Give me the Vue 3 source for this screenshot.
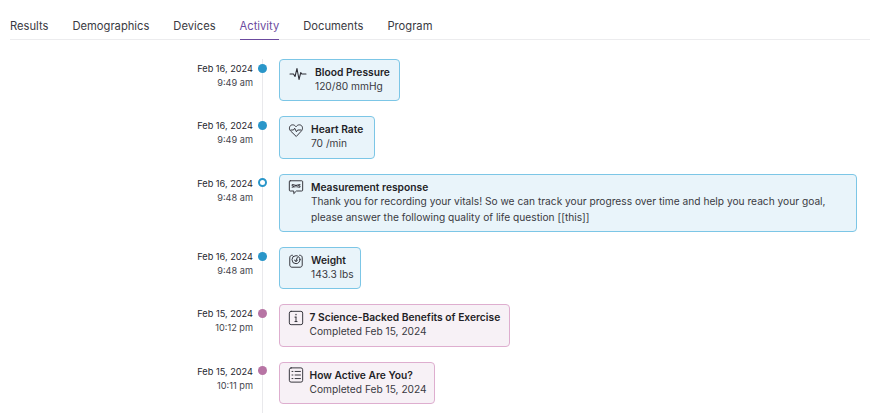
<script setup>
const tabs = [
  { label: 'Results' },
  { label: 'Demographics' },
  { label: 'Devices' },
  { label: 'Activity', active: true },
  { label: 'Documents' },
  { label: 'Program' }
]
const rows = [
  { date: 'Feb 16, 2024', time: '9:49 am', dot: 'blue', kind: 'blue', icon: 'pulse', title: 'Blood Pressure', lines: ['120/80 mmHg'] },
  { date: 'Feb 16, 2024', time: '9:49 am', dot: 'blue', kind: 'blue', icon: 'heart', title: 'Heart Rate', lines: ['70 /min'] },
  { date: 'Feb 16, 2024', time: '9:48 am', dot: 'ring', kind: 'blue', icon: 'sms', title: 'Measurement response', lines: ['Thank you for recording your vitals! So we can track your progress over time and help you reach your goal,', 'please answer the following quality of life question [[this]]'] },
  { date: 'Feb 16, 2024', time: '9:48 am', dot: 'blue', kind: 'blue', icon: 'scale', title: 'Weight', lines: ['143.3 lbs'] },
  { date: 'Feb 15, 2024', time: '10:12 pm', dot: 'pink', kind: 'pink', icon: 'info', title: '7 Science-Backed Benefits of Exercise', lines: ['Completed Feb 15, 2024'] },
  { date: 'Feb 15, 2024', time: '10:11 pm', dot: 'pink', kind: 'pink', icon: 'list', title: 'How Active Are You?', lines: ['Completed Feb 15, 2024'] }
]
</script>

<template>
  <div class="page">
    <nav class="tabs">
      <span v-for="t in tabs" :key="t.label" class="tab" :class="{ active: t.active }">{{ t.label }}</span>
    </nav>
    <div class="timeline">
      <div v-for="(r, i) in rows" :key="i" class="row">
        <div class="when">
          <div class="date">{{ r.date }}</div>
          <div class="time">{{ r.time }}</div>
        </div>
        <div class="rail"><span class="dot" :class="r.dot"></span></div>
        <div class="card" :class="[r.kind, r.icon]">
          <svg class="icon" viewBox="0 0 18 18" fill="none" stroke="#2b2b33" stroke-width="1.050" stroke-linecap="round" stroke-linejoin="round">
            <path v-if="r.icon === 'pulse'" d="M1 9h3.500l1.500 2.500L8 3.500l2 11 1.800-7 1 1.500H17" />
            <template v-else-if="r.icon === 'heart'">
              <path d="M9 16 2.800 10C.6 7.800 1.500 3.400 5 3.200c1.800-.1 3 .9 4 2.100 1-1.200 2.200-2.200 4-2.100 3.500.2 4.400 4.600 2.200 6.800z" />
              <path d="M3.500 9h2.700l1.300-2 2 4 1.300-2h3.700" />
            </template>
            <template v-else-if="r.icon === 'sms'">
              <path d="M2.500 2h13a1 1 0 0 1 1 1v9.500a1 1 0 0 1-1 1H9.500l-3 3v-3h-4a1 1 0 0 1-1-1V3a1 1 0 0 1 1-1z" />
              <path d="M6.200 6.300H4.600v1.400h1.600v1.500H4.600M7.700 9.200V6.300l1.300 1.800 1.300-1.800v2.900M13.500 6.300h-1.700v1.400h1.700v1.500h-1.700" stroke-width="1" />
            </template>
            <template v-else-if="r.icon === 'scale'">
              <path d="M5 2.500C3 2.500 2 3.500 2 5.500v8C2 15 3 16 4.500 16h9c1.500 0 2.500-1 2.500-2.500v-8c0-2-1-3-3-3" />
              <circle cx="9" cy="7.500" r="4.500" />
              <path d="M9 8.500 10.500 5M7.500 8a1.500 1.500 0 0 0 3 0" />
            </template>
            <template v-else-if="r.icon === 'info'">
              <rect x="1.500" y="1.500" width="15" height="15" rx="2" />
              <path d="M9 8v5M7.800 13h2.400M7.800 8H9" />
              <path d="M9 5v.3" stroke-width="1.400" />
            </template>
            <template v-else>
              <rect x="1.500" y="1" width="15" height="16" rx="2" />
              <path d="M4.500 5h1M8 5h6M4.500 9h1M8 9h6M4.500 13h1M8 13h6" />
            </template>
          </svg>
          <div class="body">
            <div class="title">{{ r.title }}</div>
            <div v-for="(l, j) in r.lines" :key="j" class="line">{{ l }}</div>
          </div>
        </div>
      </div>
    </div>
  </div>
</template>

<style>
html, body { margin: 0; background: #fff; }
</style>

<style scoped>
.page {
  width: 870px;
  height: 413px;
  overflow: hidden;
  font-family: "Inter", "Open Sans", sans-serif;
  color: #26262e;
  box-sizing: border-box;
  padding-left: 10px;
}
.tabs {
  display: flex;
  gap: 24px;
  height: 39px;
  border-bottom: 1px solid #ececee;
}
.tab {
  font-size: 11.200px;
  line-height: 14px;
  padding-top: 19px;
  height: 20px;
  color: #3a3a42;
}
.tab.active {
  color: #6b4a9e;
  border-bottom: 1px solid #6b4a9e;
}
.timeline {
  padding-top: 19px;
}
.row {
  display: flex;
  padding-bottom: 15px;
}
.when {
  width: 243px;
  text-align: right;
  font-size: 9.200px;
  line-height: 14px;
  flex: none;
}
.date { color: #26262e; margin-top: 3px; }
.time { color: #44444c; }
.rail {
  width: 26px;
  flex: none;
  position: relative;
}
.rail::before {
  content: "";
  position: absolute;
  left: 9px;
  top: 0;
  bottom: -15px;
  width: 1px;
  background: #e9e9ec;
}
.dot {
  position: absolute;
  left: 5px;
  top: 4.500px;
  width: 9px;
  height: 9px;
  border-radius: 50%;
  box-sizing: border-box;
}
.dot.blue { background: #2a96c9; }
.dot.pink { background: #b774a4; }
.dot.ring { background: #fff; border: 2px solid #2a96c9; }
.card {
  display: flex;
  align-items: flex-start;
  border-radius: 4px;
  border: 1px solid;
  box-sizing: border-box;
  padding: 5px 8px 6.750px 8px;
}
.card.blue { background: #e9f4fa; border-color: #7cc6e6; }
.card.pink { background: #f7f1f6; border-color: #deaecf; }
.card.pulse { width: 121px; }
.card.heart { width: 96px; }
.card.sms { width: 578px; }
.card.scale { width: 82px; }
.card.info { width: 231px; }
.card.list { width: 156px; }
.icon { flex: none; width: 16px; height: 16px; margin-top: -.5px; margin-right: 7px; }
.card.pulse .icon { width: 18px; height: 18px; margin: 0 8px 0 1px; }
.card.pink .icon { margin-right: 5.500px; }
.title {
  font-size: 10.250px;
  line-height: 14px;
  font-weight: 600;
  color: #1f1f27;
}
.line {
  font-size: 10.200px;
  line-height: 14.500px;
  color: #3a3a42;
  white-space: nowrap;
}
.line + .line { margin-top: 1.750px; }
</style>
